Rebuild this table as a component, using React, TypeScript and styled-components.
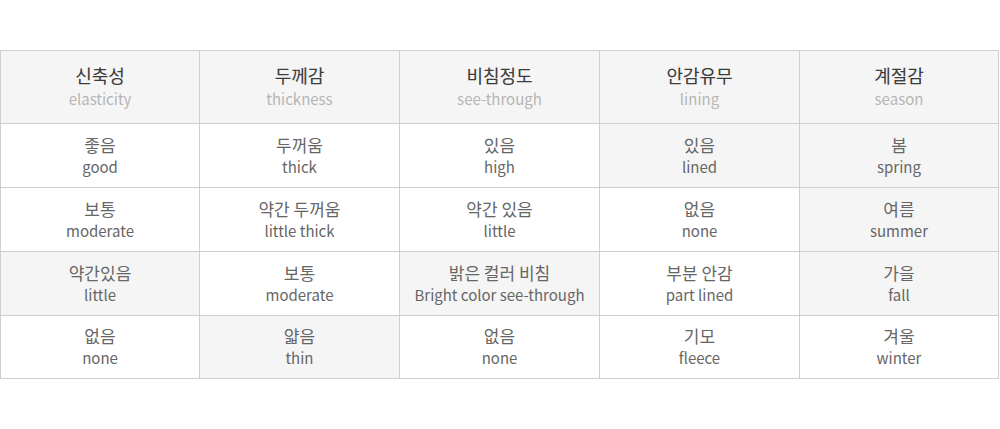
import * as React from 'react';
import styled, { createGlobalStyle } from 'styled-components';

const GlobalStyle = createGlobalStyle`
  body {
    margin: 0;
    background: #fff;
    font-family: 'Noto Sans CJK KR', 'Noto Sans', sans-serif;
  }
`;

interface Item {
  ko: string;
  en: string;
  on?: boolean;
}

const headers: Item[] = [
  { ko: '신축성', en: 'elasticity' },
  { ko: '두께감', en: 'thickness' },
  { ko: '비침정도', en: 'see-through' },
  { ko: '안감유무', en: 'lining' },
  { ko: '계절감', en: 'season' },
];

const rows: Item[][] = [
  [
    { ko: '좋음', en: 'good' },
    { ko: '두꺼움', en: 'thick' },
    { ko: '있음', en: 'high' },
    { ko: '있음', en: 'lined', on: true },
    { ko: '봄', en: 'spring', on: true },
  ],
  [
    { ko: '보통', en: 'moderate' },
    { ko: '약간 두꺼움', en: 'little thick' },
    { ko: '약간 있음', en: 'little' },
    { ko: '없음', en: 'none' },
    { ko: '여름', en: 'summer', on: true },
  ],
  [
    { ko: '약간있음', en: 'little', on: true },
    { ko: '보통', en: 'moderate' },
    { ko: '밝은 컬러 비침', en: 'Bright color see-through', on: true },
    { ko: '부분 안감', en: 'part lined' },
    { ko: '가을', en: 'fall', on: true },
  ],
  [
    { ko: '없음', en: 'none' },
    { ko: '얇음', en: 'thin', on: true },
    { ko: '없음', en: 'none' },
    { ko: '기모', en: 'fleece' },
    { ko: '겨울', en: 'winter' },
  ],
];

export default function App() {
  return (
    <>
      <GlobalStyle />
      <Wrap>
        <Table>
          <colgroup>
            {headers.map((h, i) => (
              <Col key={h.en} $edge={i === 0 || i === headers.length - 1} />
            ))}
          </colgroup>
          <thead>
            <tr>
              {headers.map((h) => (
                <HeadCell key={h.en}>
                  <HeadKo>{h.ko}</HeadKo>
                  <HeadEn>{h.en}</HeadEn>
                </HeadCell>
              ))}
            </tr>
          </thead>
          <tbody>
            {rows.map((row, i) => (
              <Row key={i}>
                {row.map((c, j) => (
                  <Cell key={j} $on={!!c.on}>
                    <Ko>{c.ko}</Ko>
                    <En>{c.en}</En>
                  </Cell>
                ))}
              </Row>
            ))}
          </tbody>
        </Table>
      </Wrap>
    </>
  );
}

const Wrap = styled.div`
  padding-top: 50px;
`;

const Table = styled.table`
  width: 999px;
  border-collapse: collapse;
  table-layout: fixed;
  text-align: center;
`;

const Col = styled.col<{ $edge: boolean }>`
  width: ${(p) => (p.$edge ? '199px' : '200px')};
`;

const HeadCell = styled.th`
  height: 72px;
  padding: 0;
  border: 1px solid #cfcfcf;
  background: #f5f5f5;
  font-weight: normal;
  vertical-align: middle;
`;

const HeadKo = styled.div`
  font-size: 18px;
  line-height: 23px;
  color: #3c3c3c;
  -webkit-text-stroke: 0.1px #3c3c3c;
`;

const HeadEn = styled.div`
  font-size: 15px;
  line-height: 23px;
  color: #b5b5b5;
`;

const Row = styled.tr`
  height: 64px;
  &:last-child {
    height: 63px;
  }
`;

const Cell = styled.td<{ $on: boolean }>`
  padding: 0;
  border: 1px solid #cfcfcf;
  background: ${(p) => (p.$on ? '#f5f5f5' : '#fff')};
  vertical-align: middle;
`;

const Ko = styled.div`
  font-size: 17px;
  line-height: 22px;
  color: #666;
`;

const En = styled.div`
  font-size: 15px;
  line-height: 22px;
  color: #666;
`;
